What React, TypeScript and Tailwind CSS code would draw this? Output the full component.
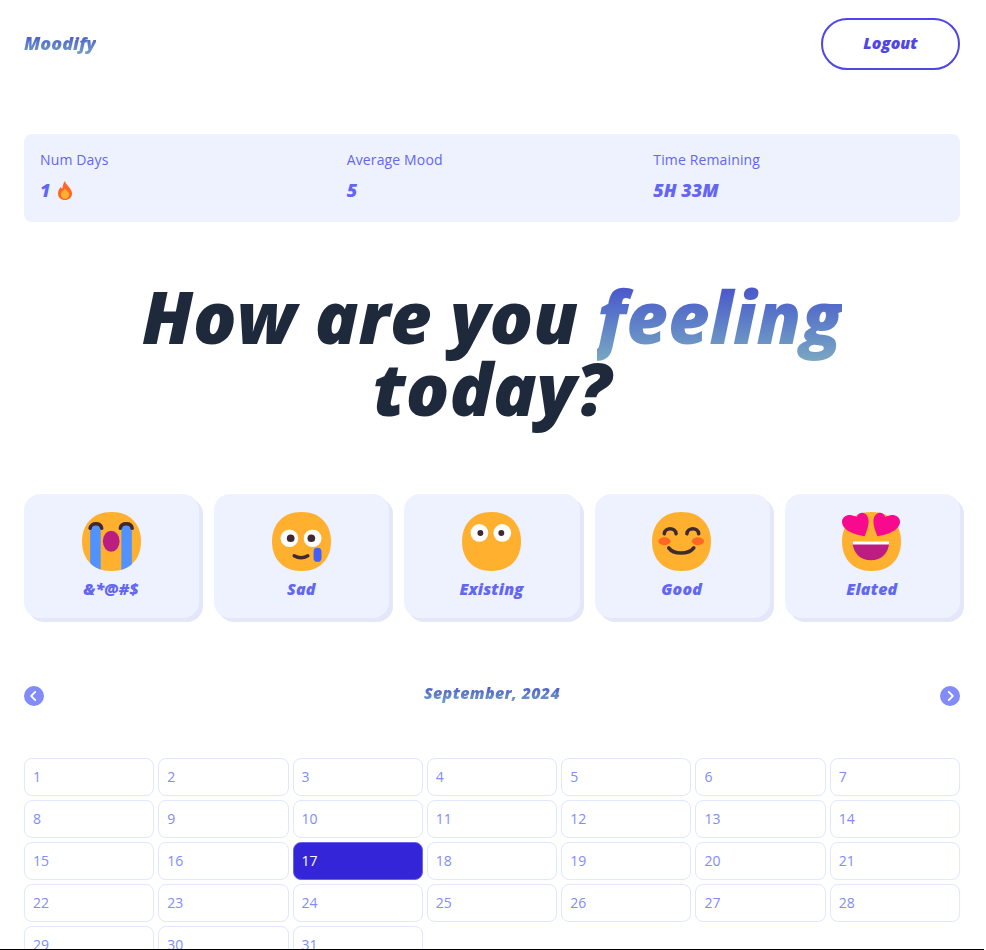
import { FaCircleChevronLeft, FaCircleChevronRight } from "react-icons/fa6";

// Display font of the page: heavy italic
const display = "font-['Open_Sans',sans-serif] font-extrabold italic";
const gradient =
  "bg-gradient-to-b from-[#4338ca] to-[#7dabc0] bg-clip-text text-transparent";

const Face = () => (
  <path
    d="M30 60C50 60 60 46.6 60 30C60 13.4 50 0 30 0C10 0 0 13.4 0 30C0 46.6 10 60 30 60Z"
    fill="#FFB02E"
  />
);

function Crying() {
  return (
    <svg viewBox="0 0 60 60" className="w-[59px] h-[59px]">
      <defs>
        <clipPath id="cry-face">
          <path d="M30 60C50 60 60 46.6 60 30C60 13.4 50 0 30 0C10 0 0 13.4 0 30C0 46.6 10 60 30 60Z" />
        </clipPath>
      </defs>
      <Face />
      <g clipPath="url(#cry-face)" fill="#5092FF">
        <path d="M8.3 20C8.3 11 19 11 19 20V62H8.3Z" />
        <path d="M40 20C40 11 50.7 11 50.7 20V62H40Z" />
      </g>
      <path d="M8.2 16.5C9 10.5 19 10.5 20 16.5" fill="none" stroke="#402A32" strokeWidth="3.6" strokeLinecap="round" />
      <path d="M39 16.5C40 10.5 50 10.5 51 16.5" fill="none" stroke="#402A32" strokeWidth="3.6" strokeLinecap="round" />
      <ellipse cx="29.7" cy="29.7" rx="8.5" ry="10.7" fill="#BB1D80" />
    </svg>
  );
}

function Sad() {
  return (
    <svg viewBox="0 0 60 60" className="w-[59px] h-[59px]">
      <Face />
      <circle cx="17.7" cy="26.7" r="9" fill="#fff" />
      <circle cx="41.3" cy="26.7" r="9" fill="#fff" />
      <circle cx="19" cy="26.7" r="3.9" fill="#402A32" />
      <circle cx="40" cy="26.7" r="3.9" fill="#402A32" />
      <path d="M22.5 44.5Q29.5 48.5 36.5 44.5" fill="none" stroke="#402A32" strokeWidth="3.4" strokeLinecap="round" />
      <rect x="42.3" y="36.3" width="8" height="14.4" rx="4" fill="#3F5FFF" />
    </svg>
  );
}

function Existing() {
  return (
    <svg viewBox="0 0 60 60" className="w-[59px] h-[59px]">
      <Face />
      <circle cx="17.7" cy="21.3" r="9" fill="#fff" />
      <circle cx="41" cy="21.3" r="9" fill="#fff" />
      <circle cx="18.7" cy="21.3" r="3" fill="#402A32" />
      <circle cx="40" cy="21.3" r="3" fill="#402A32" />
    </svg>
  );
}

function Good() {
  return (
    <svg viewBox="0 0 60 60" className="w-[59px] h-[59px]">
      <Face />
      <path d="M12.5 22C13.5 15.5 23.5 15.5 24.5 22" fill="none" stroke="#402A32" strokeWidth="3.6" strokeLinecap="round" />
      <path d="M35.5 22C36.5 15.5 46.5 15.5 47.5 22" fill="none" stroke="#402A32" strokeWidth="3.6" strokeLinecap="round" />
      <ellipse cx="12.7" cy="29.7" rx="6.2" ry="4" fill="#FF6723" />
      <ellipse cx="46.7" cy="29.7" rx="6.2" ry="4" fill="#FF6723" />
      <path d="M17 36.5C22 43.5 37 43.5 42.5 36.5" fill="none" stroke="#402A32" strokeWidth="3.6" strokeLinecap="round" />
    </svg>
  );
}

function Elated() {
  return (
    <svg viewBox="0 0 60 60" className="w-[59px] h-[59px] overflow-visible">
      <Face />
      <path d="M10.7 29.7H48C48 42 40 49 29.3 49C19 49 10.7 42 10.7 29.7Z" fill="#BB1D80" />
      <path d="M10.7 29.7H48C48 30.8 47.9 32 47.7 33H11C10.8 32 10.7 30.8 10.7 29.7Z" fill="#fff" />
      <path d="M23 24.7C14 23.5 0 19 0 10C0 5 5 2.5 9.5 3.2C11.5 3.5 13.5 4 15 5C16 2 18.5 0.7 20.5 0.8C25 1 27.5 6 27 11C26.5 16 24.5 21 23 24.7Z" fill="#F70A8D" />
      <path d="M36 24.7C45 23.5 59 19 59 10C59 5 54 2.5 49.5 3.2C47.5 3.5 45.5 4 44 5C43 2 40.5 0.7 38.5 0.8C34 1 31.5 6 32 11C32.5 16 34.5 21 36 24.7Z" fill="#F70A8D" />
    </svg>
  );
}

function Flame() {
  return (
    <svg viewBox="0 0 14 19" className="w-[14px] h-[19px]">
      <path d="M7 0C7.5 2.5 9 3.5 10.5 5.5C12.5 8 14 10 14 12.5C14 16.5 11 19 7 19C3 19 0 16.5 0 12.5C0 9.5 1.5 7.5 2.8 6C3.2 7 3.8 7.5 4.5 7.5C4.5 4.5 5.5 2 7 0Z" fill="#FF6723" />
      <path d="M7 7.5C8 9.5 11.2 10.8 11.2 13.5C11.2 16 9.4 17.8 7 17.8C4.6 17.8 2.8 16 2.8 13.5C2.8 10.8 6 9.5 7 7.5Z" fill="#FFB02E" />
    </svg>
  );
}

const moods = [
  { label: "&*@#$", Icon: Crying },
  { label: "Sad", Icon: Sad },
  { label: "Existing", Icon: Existing },
  { label: "Good", Icon: Good },
  { label: "Elated", Icon: Elated },
];

const days = Array.from({ length: 31 }, (_, i) => i + 1);

export default function App() {
  return (
    <div className="w-[984px] h-[950px] overflow-hidden bg-white font-['Open_Sans',sans-serif]">
      <div className="h-[949px] overflow-hidden">
        <div className="flex flex-col px-6 pt-[18px]">
          <header className="flex items-center justify-between h-[52px]">
            <h1 className={`text-lg leading-[28px] mb-[3px] ${display} ${gradient}`}>Moodify</h1>
            <button className="w-[139px] h-[52px] pb-[2px] rounded-full border-2 border-[#4f46e5] bg-white">
              <span className={`text-[#4f46e5] text-base ${display}`}>Logout</span>
            </button>
          </header>

          <section className="mt-16 grid grid-cols-3 gap-4 p-4 rounded-lg bg-[#eef2ff] h-[88px]">
            <div className="flex flex-col gap-[6px]">
              <p className="text-sm leading-5 tracking-[0.01em] text-[#6366f1]">Num Days</p>
              <p className={`flex items-center gap-2 text-lg leading-7 text-[#6366f1] ${display}`}>
                1 <Flame />
              </p>
            </div>
            <div className="flex flex-col gap-[6px]">
              <p className="text-sm leading-5 tracking-[0.01em] text-[#6366f1]">Average Mood</p>
              <p className={`text-lg leading-7 text-[#6366f1] ${display}`}>5</p>
            </div>
            <div className="flex flex-col gap-[6px]">
              <p className="text-sm leading-5 tracking-[0.01em] text-[#6366f1]">Time Remaining</p>
              <p className={`text-lg leading-7 text-[#6366f1] ${display}`}>5H 33M</p>
            </div>
          </section>

          <h2 className={`mt-[58px] h-[150px] text-center text-7xl leading-[72px] text-[#1e293b] ${display}`}>
            How are you <span className={gradient}>feeling</span>
            <br />
            today?
          </h2>

          <section className="mt-16 grid grid-cols-5 gap-[15px]">
            {moods.map(({ label, Icon }) => (
              <button
                key={label}
                className="flex flex-col items-center h-[124px] pt-[18px] pr-px rounded-2xl bg-[#eef2ff] shadow-[4px_4px_0_0_#e4e6f9]"
              >
                <Icon />
                <span className={`mt-[6px] text-base leading-6 tracking-[0.01em] text-[#6366f1] ${display}`}>{label}</span>
              </button>
            ))}
          </section>

          <section className="mt-16 flex items-start justify-between h-[76px] pt-1">
            <FaCircleChevronLeft className="text-[20px] text-[#818cf8]" />
            <p className={`-mt-[5px] text-base leading-6 tracking-[0.02em] ${display} ${gradient}`}>September, 2024</p>
            <FaCircleChevronRight className="text-[20px] text-[#818cf8]" />
          </section>

          <section className="grid grid-cols-7 gap-1">
            {days.map((d) => (
              <button
                key={d}
                className={
                  d === 17
                    ? "p-2 text-left text-sm leading-5 rounded-lg border border-[#6366f1] bg-[#3525d9] text-white"
                    : "p-2 text-left text-sm leading-5 rounded-lg border border-[#e0e7ff] bg-white text-[#818cf8]"
                }
              >
                {d}
              </button>
            ))}
          </section>
        </div>
      </div>
      <div className="h-px bg-black" />
    </div>
  );
}
